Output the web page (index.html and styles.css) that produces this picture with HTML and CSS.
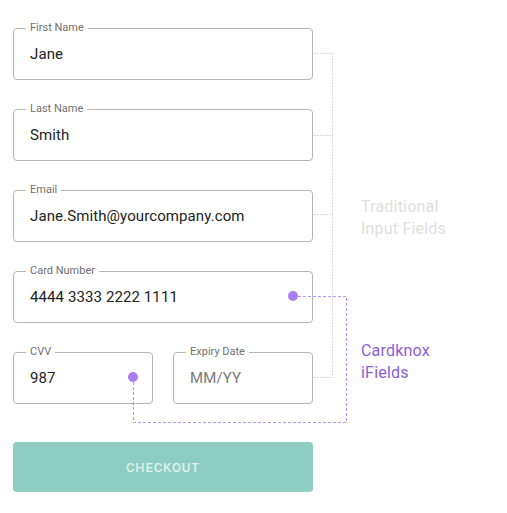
FILE: index.html
```html
<!DOCTYPE html>
<html>
<head>
<meta charset="utf-8">
<link rel="stylesheet" href="styles.css">
</head>
<body>
<div class="page">
  <form class="form">
    <div class="field"><span class="label">First Name</span><span class="value">Jane</span></div>
    <div class="field"><span class="label">Last Name</span><span class="value">Smith</span></div>
    <div class="field"><span class="label">Email</span><span class="value">Jane.Smith@yourcompany.com</span></div>
    <div class="field"><span class="label">Card Number</span><span class="value">4444 3333 2222 1111</span></div>
    <div class="row">
      <div class="field"><span class="label">CVV</span><span class="value">987</span></div>
      <div class="field"><span class="label">Expiry Date</span><span class="value placeholder">MM/YY</span></div>
    </div>
    <div class="button">CHECKOUT</div>
  </form>
  <div class="notes">
    <p class="note traditional">Traditional<br>Input Fields</p>
    <p class="note ifields">Cardknox<br>iFields</p>
  </div>
  <svg class="connectors" width="507" height="513" viewBox="0 0 507 513">
    <g stroke="#d0d0d0" stroke-width="1" fill="none" stroke-dasharray="1.5 1.5">
      <path d="M314 53.5H332.5M314 135.5H332.5M314 214.5H332.5M314 377.5H332.5M332.5 53V378"/>
    </g>
    <g stroke="#b794f6" stroke-width="1" fill="none" stroke-dasharray="3 2">
      <path d="M298 296.5H346.5V422.5H133.5V382"/>
    </g>
    <circle cx="293" cy="296" r="5" fill="#a97ef5"/>
    <circle cx="133" cy="377" r="5" fill="#a97ef5"/>
  </svg>
</div>
</body>
</html>
```
FILE: styles.css
```css
* { box-sizing: border-box; }
html, body { margin: 0; padding: 0; background: #fff; }
body { font-family: Roboto, "Liberation Sans", sans-serif; }
.page {
  position: relative;
  width: 507px;
  height: 513px;
  display: flex;
  gap: 48px;
  padding: 28px 13px 0 13px;
}
.form {
  width: 300px;
  display: flex;
  flex-direction: column;
  gap: 29px;
  margin: 0;
}
.field {
  position: relative;
  height: 52px;
  border: 1px solid #b5b5b5;
  border-radius: 4px;
  display: flex;
  align-items: center;
  padding: 0 16px;
}
.label {
  position: absolute;
  left: 12px;
  top: -8px;
  padding: 0 4px;
  background: #fff;
  font-size: 11px;
  line-height: 14px;
  color: #6f6f6f;
}
.value {
  font-size: 15px;
  color: #222;
  letter-spacing: 0.1px;
}
.value.placeholder { color: #7a7a7a; }
.row {
  display: flex;
  gap: 20px;
}
.row .field { flex: 1; }
.button {
  margin-top: 9px;
  height: 50px;
  border-radius: 4px;
  background: #8ecdc1;
  color: rgba(255, 255, 255, 0.72);
  font-size: 13px;
  font-weight: 500;
  letter-spacing: 0.9px;
  display: flex;
  align-items: center;
  justify-content: center;
}
.notes {
  display: flex;
  flex-direction: column;
}
.note {
  margin: 0;
  font-size: 16px;
  line-height: 22px;
  letter-spacing: 0.2px;
}
.traditional { margin-top: 168px; color: #dedede; }
.ifields { margin-top: 100px; color: #8a5ed8; }
.connectors {
  position: absolute;
  left: 0;
  top: 0;
  pointer-events: none;
}
```
